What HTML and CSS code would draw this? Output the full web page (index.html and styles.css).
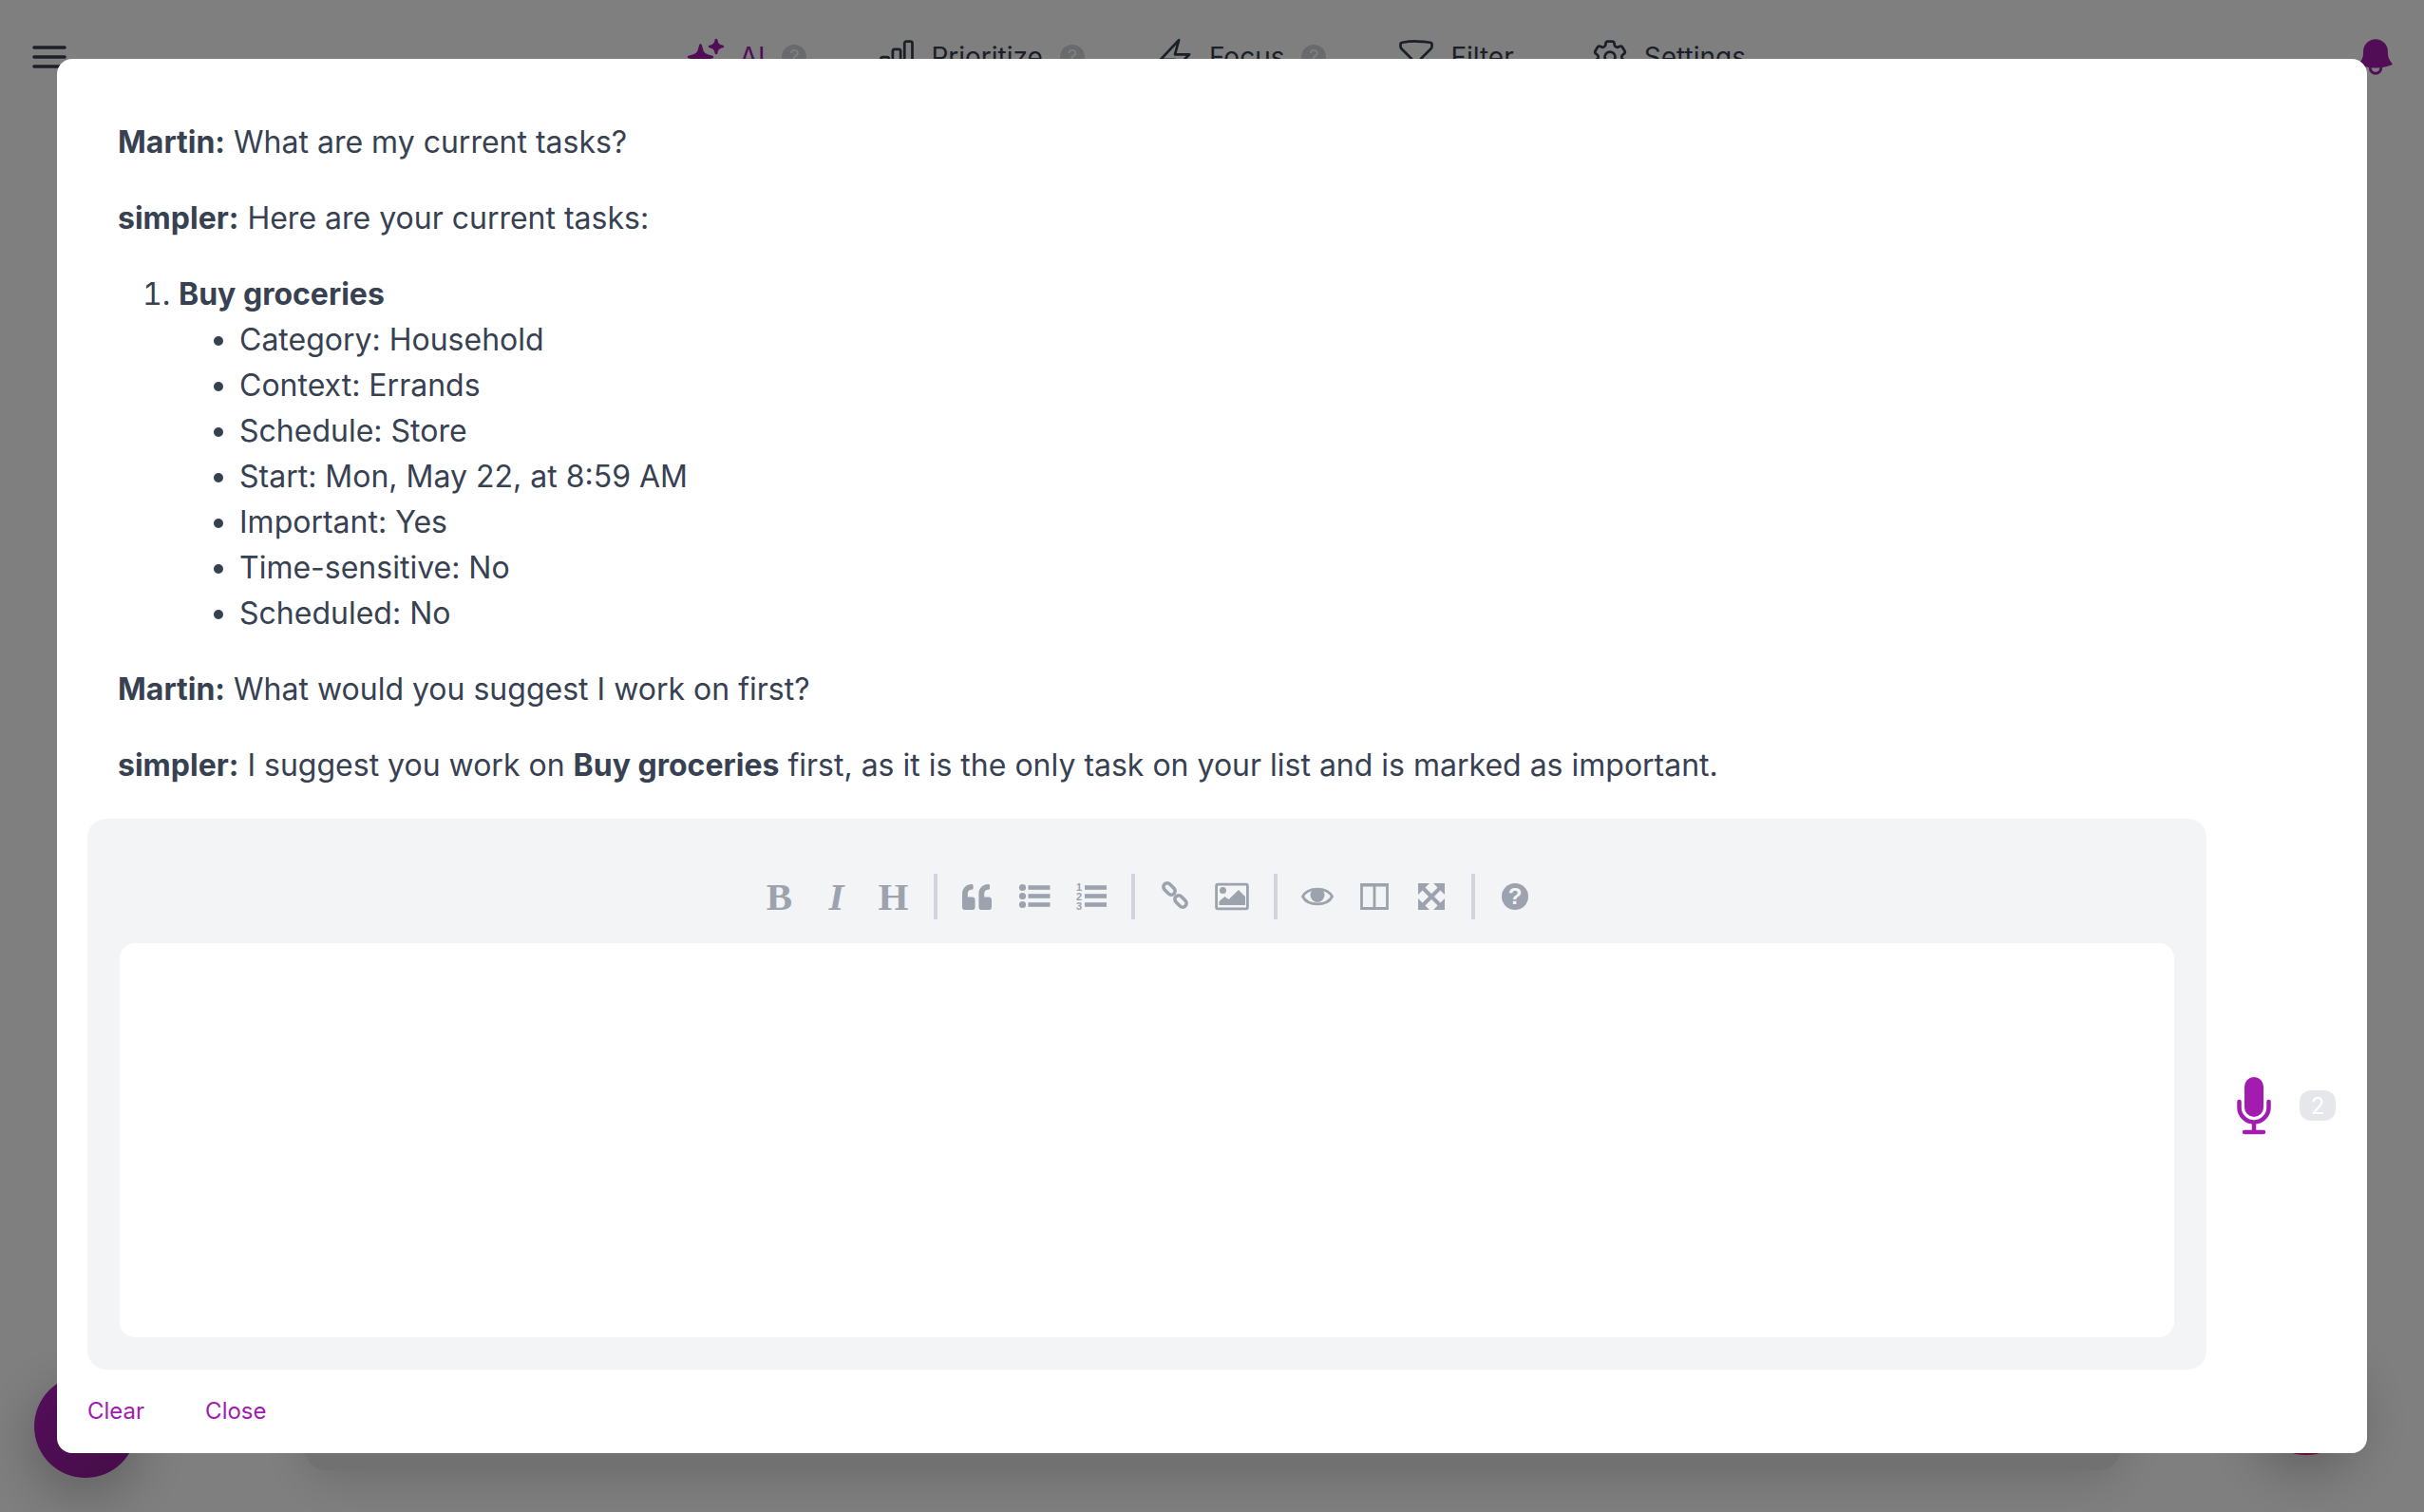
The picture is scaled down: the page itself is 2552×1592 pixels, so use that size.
FILE: index.html
```html
<!DOCTYPE html>
<html lang="en">
<head>
<meta charset="utf-8">
<title>simpler</title>
<link rel="stylesheet" href="styles.css">
</head>
<body>
<header class="app-header">
  <svg class="hamburger" viewBox="0 0 36 24"><path d="M2 2h32M2 12h32M2 22h32"/></svg>
  <nav class="nav">
    <a class="nav-item nav-item-active">
      <svg class="nav-icon solid" viewBox="0 0 24 24"><path d="M9 4.5a.75.75 0 01.721.544l.813 2.846a3.75 3.75 0 002.576 2.576l2.846.813a.75.75 0 010 1.442l-2.846.813a3.75 3.75 0 00-2.576 2.576l-.813 2.846a.75.75 0 01-1.442 0l-.813-2.846a3.75 3.75 0 00-2.576-2.576l-2.846-.813a.75.75 0 010-1.442l2.846-.813A3.75 3.75 0 007.466 7.89l.813-2.846A.75.75 0 019 4.5zM18 1.5a.75.75 0 01.728.568l.258 1.036c.236.94.97 1.674 1.91 1.91l1.036.258a.75.75 0 010 1.456l-1.036.258c-.94.236-1.674.97-1.91 1.91l-.258 1.036a.75.75 0 01-1.456 0l-.258-1.036a2.625 2.625 0 00-1.91-1.91l-1.036-.258a.75.75 0 010-1.456l1.036-.258a2.625 2.625 0 001.91-1.91l.258-1.036A.75.75 0 0118 1.5zM16.5 15a.75.75 0 01.712.513l.394 1.183c.15.447.5.799.948.948l1.183.395a.75.75 0 010 1.422l-1.183.395c-.447.15-.799.5-.948.948l-.395 1.183a.75.75 0 01-1.422 0l-.395-1.183a1.5 1.5 0 00-.948-.948l-1.183-.395a.75.75 0 010-1.422l1.183-.395c.447-.15.799-.5.948-.948l.395-1.183A.75.75 0 0116.5 15z"/></svg>
      <span>AI</span><span class="nav-badge">?</span>
    </a>
    <a class="nav-item">
      <svg class="nav-icon" viewBox="0 0 24 24"><path d="M3 13.125C3 12.504 3.504 12 4.125 12h2.25c.621 0 1.125.504 1.125 1.125v6.75C7.5 20.496 6.996 21 6.375 21h-2.25A1.125 1.125 0 013 19.875v-6.75zM9.75 8.625c0-.621.504-1.125 1.125-1.125h2.25c.621 0 1.125.504 1.125 1.125v11.25c0 .621-.504 1.125-1.125 1.125h-2.25a1.125 1.125 0 01-1.125-1.125V8.625zM16.5 4.125c0-.621.504-1.125 1.125-1.125h2.25C20.496 3 21 3.504 21 4.125v15.75c0 .621-.504 1.125-1.125 1.125h-2.25a1.125 1.125 0 01-1.125-1.125V4.125z"/></svg>
      <span>Prioritize</span><span class="nav-badge">?</span>
    </a>
    <a class="nav-item">
      <svg class="nav-icon" viewBox="0 0 24 24"><path d="M3.75 13.5l10.5-11.25L12 10.5h8.25L9.75 21.75 12 13.5H3.75z"/></svg>
      <span>Focus</span><span class="nav-badge">?</span>
    </a>
    <a class="nav-item">
      <svg class="nav-icon" viewBox="0 0 24 24"><path d="M12 3c2.755 0 5.455.232 8.083.678.533.09.917.556.917 1.096v1.044a2.25 2.25 0 01-.659 1.591l-5.432 5.432a2.25 2.25 0 00-.659 1.591v2.927a2.25 2.25 0 01-1.244 2.013L9.75 21v-6.568a2.25 2.25 0 00-.659-1.591L3.659 7.409A2.25 2.25 0 013 5.818V4.774c0-.54.384-1.006.917-1.096A48.32 48.32 0 0112 3z"/></svg>
      <span>Filter</span>
    </a>
    <a class="nav-item nav-item-last">
      <svg class="nav-icon" viewBox="0 0 24 24"><path d="M9.594 3.94c.09-.542.56-.94 1.11-.94h2.593c.55 0 1.02.398 1.11.94l.213 1.281c.063.374.313.686.645.87.074.04.147.083.22.127.324.196.72.257 1.075.124l1.217-.456a1.125 1.125 0 011.37.49l1.296 2.247a1.125 1.125 0 01-.26 1.431l-1.003.827c-.293.24-.438.613-.431.992a6.759 6.759 0 010 .255c-.007.378.138.75.43.99l1.005.828c.424.35.534.954.26 1.43l-1.298 2.247a1.125 1.125 0 01-1.369.491l-1.217-.456c-.355-.133-.75-.072-1.076.124a6.57 6.57 0 01-.22.128c-.331.183-.581.495-.644.869l-.213 1.28c-.09.543-.56.941-1.11.941h-2.594c-.55 0-1.02-.398-1.11-.94l-.213-1.281c-.062-.374-.312-.686-.644-.87a6.52 6.52 0 01-.22-.127c-.325-.196-.72-.257-1.076-.124l-1.217.456a1.125 1.125 0 01-1.369-.49l-1.297-2.247a1.125 1.125 0 01.26-1.431l1.004-.827c.292-.24.437-.613.43-.992a6.932 6.932 0 010-.255c.007-.378-.138-.75-.43-.99l-1.004-.828a1.125 1.125 0 01-.26-1.43l1.297-2.247a1.125 1.125 0 011.37-.491l1.216.456c.356.133.751.072 1.076-.124.072-.044.146-.087.22-.128.332-.183.582-.495.644-.869l.214-1.281z"/><path d="M15 12a3 3 0 11-6 0 3 3 0 016 0z"/></svg>
      <span>Settings</span>
    </a>
  </nav>
  <svg class="bell" viewBox="0 0 24 24"><path fill-rule="evenodd" d="M5.25 9a6.75 6.75 0 0113.5 0v.75c0 2.123.8 4.057 2.118 5.52a.75.75 0 01-.297 1.206c-1.544.57-3.16.99-4.831 1.243a3.75 3.75 0 11-7.48 0 24.585 24.585 0 01-4.831-1.244.75.75 0 01-.298-1.205A8.217 8.217 0 005.25 9.75V9zm4.502 8.9a2.25 2.25 0 104.496 0 25.057 25.057 0 01-4.496 0z"/></svg>
</header>

<div class="fab fab-left"></div>
<div class="bottom-bar"></div>
<div class="fab fab-right"></div>

<div class="overlay">
  <section class="modal">
    <div class="chat">
      <p><strong>Martin:</strong> What are my current tasks?</p>
      <p><strong>simpler:</strong> Here are your current tasks:</p>
      <ol>
        <li><strong>Buy groceries</strong>
          <ul>
            <li>Category: Household</li>
            <li>Context: Errands</li>
            <li>Schedule: Store</li>
            <li>Start: Mon, May 22, at 8:59 AM</li>
            <li>Important: Yes</li>
            <li>Time-sensitive: No</li>
            <li>Scheduled: No</li>
          </ul>
        </li>
      </ol>
      <p><strong>Martin:</strong> What would you suggest I work on first?</p>
      <p><strong>simpler:</strong> I suggest you work on <strong>Buy groceries</strong> first, as it is the only task on your list and is marked as important.</p>
    </div>

    <div class="composer">
      <div class="editor-panel">
        <div class="toolbar">
          <button class="tool"><span class="glyph">B</span></button>
          <button class="tool"><span class="glyph glyph-italic">I</span></button>
          <button class="tool"><span class="glyph">H</span></button>
          <i class="sep"></i>
          <button class="tool"><svg class="tool-icon tool-icon-quote" viewBox="0 0 512 512"><path d="M464 256h-80v-64c0-35.3 28.7-64 64-64h8c13.3 0 24-10.7 24-24V56c0-13.3-10.7-24-24-24h-8c-88.4 0-160 71.6-160 160v240c0 26.5 21.5 48 48 48h128c26.5 0 48-21.5 48-48V304c0-26.5-21.5-48-48-48zm-288 0H96v-64c0-35.3 28.7-64 64-64h8c13.3 0 24-10.7 24-24V56c0-13.3-10.7-24-24-24h-8C71.6 32 0 103.6 0 192v240c0 26.5 21.5 48 48 48h128c26.500 0 48-21.5 48-48V304c0-26.5-21.5-48-48-48z"/></svg></button>
          <button class="tool"><svg class="tool-icon" viewBox="0 0 36 36"><circle cx="5.5" cy="8.5" r="3.6"/><circle cx="5.5" cy="17.5" r="3.6"/><circle cx="5.5" cy="26.5" r="3.6"/><rect x="11.5" y="6.2" width="23" height="4.6"/><rect x="11.5" y="15.2" width="23" height="4.6"/><rect x="11.5" y="24.2" width="23" height="4.6"/></svg></button>
          <button class="tool"><svg class="tool-icon" viewBox="0 0 36 36"><text class="ol-num" x="2" y="12">1</text><text class="ol-num" x="2" y="22">2</text><text class="ol-num" x="2" y="32">3</text><rect x="11" y="6.2" width="23" height="4.6"/><rect x="11" y="15.2" width="23" height="4.6"/><rect x="11" y="24.2" width="23" height="4.6"/></svg></button>
          <i class="sep"></i>
          <button class="tool"><svg class="tool-icon" viewBox="0 0 36 36"><g class="line-link"><rect x="5" y="6" width="14" height="8" rx="4" transform="rotate(45 12 10)"/><rect x="17" y="19" width="14" height="8" rx="4" transform="rotate(45 24 23)"/></g></svg></button>
          <button class="tool"><svg class="tool-icon" viewBox="0 0 36 36"><rect class="line-thin" x="1.6" y="5.2" width="32.8" height="25.6" rx="1.5"/><circle cx="8.5" cy="11.5" r="3.5"/><path d="M4.5 27v-4l6-5 4 3 10.500-10 7 7v9z"/></svg></button>
          <i class="sep sep-wide"></i>
          <button class="tool"><svg class="tool-icon" viewBox="0 0 36 36"><path class="line-thin" d="M2.500 18C8 7.500 28 7.500 33.500 18 28 28.500 8 28.500 2.500 18z"/><circle cx="18" cy="16.500" r="7.500"/></svg></button>
          <button class="tool"><svg class="tool-icon" viewBox="0 0 36 36"><path class="line-thin" d="M4.500 5.500h27v25h-27zM18 5.500v25"/><rect x="3.500" y="4" width="29" height="3.500" rx="1.500"/></svg></button>
          <button class="tool"><svg class="tool-icon" viewBox="0 0 36 36"><path class="line-art" d="M9 9l18 18M27 9L9 27"/><path d="M4 4h12L4 16zM32 4v12L20 4zM4 32V20l12 12zM32 32H20l12-12z"/></svg></button>
          <i class="sep"></i>
          <button class="tool"><svg class="tool-icon" viewBox="0 0 36 36"><circle cx="18" cy="18" r="14"/><text class="help-mark" x="18" y="26">?</text></svg></button>
        </div>
        <div class="editor"></div>
      </div>
      <div class="voice">
        <svg class="mic" viewBox="0 0 36 62"><rect class="mic-body" x="8" y="1" width="20" height="42" rx="10"/><path class="mic-line" d="M2.500 27v6a15.500 15.500 0 0031 0v-6M18 49v10M8 59h20"/></svg>
        <span class="count">2</span>
      </div>
    </div>

    <div class="actions">
      <button class="action">Clear</button>
      <button class="action">Close</button>
    </div>
  </section>
</div>
</body>
</html>
```
FILE: styles.css
```css
* { box-sizing: border-box; }
html, body { height: 100%; }
body {
  margin: 0;
  background: #fff;
  font-family: Inter, "Noto Sans", sans-serif;
  color: #374151;
  overflow: hidden;
}
.app-header {
  display: grid;
  grid-template-columns: 1fr auto 1fr;
  align-items: center;
  height: 46px;
  margin-top: 37px;
  padding: 0 28px 0 32px;
}
.hamburger { width: 40px; height: 24px; padding: 0 2px; fill: none; stroke: #374151; stroke-width: 3.6; stroke-linecap: round; }
.nav { display: flex; align-items: center; gap: 73px; margin-left: 2.5px; font-size: 28px; line-height: 44px; }
.nav-item { display: flex; align-items: center; gap: 14px; color: #374151; }
.nav-item-active { color: #a21caf; }
.nav-item-last { margin-left: 6px; }
.nav-icon { width: 44px; height: 44px; fill: none; stroke: currentColor; stroke-width: 1.5; stroke-linecap: round; stroke-linejoin: round; }
.nav-icon.solid { fill: currentColor; stroke: none; }
.nav-badge {
  display: flex; align-items: center; justify-content: center;
  width: 26px; height: 26px; margin-left: 4px;
  border-radius: 50%; background: #d1d5db; color: #fff; font-size: 20px;
}
.bell { justify-self: end; width: 46px; height: 46px; fill: #a21caf; }

.fab { position: absolute; width: 108px; height: 108px; border-radius: 50%; box-shadow: 0 16px 60px rgba(0,0,0,.28); }
.fab-left { left: 36px; top: 1448px; background: linear-gradient(135deg, #aa1cb8, #8a1a8e); }
.fab-right { left: 2374px; top: 1424px; background: #c8157f; }
.bottom-bar { position: absolute; left: 320px; top: 1440px; width: 1913px; height: 108px; border-radius: 24px; background: #e2e2e3; box-shadow: 0 8px 50px rgba(0,0,0,.16); }

.overlay {
  position: fixed; inset: 0;
  display: flex;
  padding: 62px 60px;
  background: rgba(0,0,0,.5);
}
.modal {
  display: flex; flex-direction: column;
  width: 100%;
  border-radius: 16px;
  background: #fff;
  padding: 64px 32px 0;
}
.chat { padding: 0 32px; font-size: 32px; line-height: 48px; }
.chat p { margin: 0 0 32px; }
.chat strong { font-weight: 700; }
.chat ol { margin: 0 0 32px; padding-left: 64px; }
.chat ul { margin: 0; padding-left: 64px; list-style: disc; }
.chat > :last-child { margin-bottom: 0; }

.composer { display: flex; align-items: center; margin-top: 32px; }
.editor-panel {
  flex: none;
  width: 2231px;
  padding: 33px 34px 34px;
  border-radius: 20px;
  background: #f3f4f6;
}
.toolbar { display: flex; align-items: center; justify-content: center; height: 98px; color: #9ca3af; }
.tool { display: flex; align-items: center; justify-content: center; width: 60px; height: 60px; padding: 0; border: 0; background: none; color: inherit; }
.tool-icon { width: 36px; height: 36px; fill: currentColor; }
.tool-icon-quote { width: 31px; height: 31px; }
.tool-icon text { fill: currentColor; }
.glyph { font: 700 41px/1 "Liberation Serif", serif; }
.glyph-italic { font-style: italic; }
.sep { width: 4px; height: 48px; margin: 0 12px; background: #d1d5db; }
.sep-wide { margin-left: 14px; }
.line-art { fill: none; stroke: currentColor; stroke-width: 4; }
.line-thin { fill: none; stroke: currentColor; stroke-width: 2.8; }
.line-link { fill: none; stroke: currentColor; stroke-width: 3.6; }
.tool-icon .ol-num { font: 700 11px "Liberation Sans", sans-serif; }
.tool-icon .help-mark { font: 700 24px "Liberation Sans", sans-serif; text-anchor: middle; fill: #f3f4f6; }
.editor { height: 415px; border-radius: 16px; background: #fff; }

.voice { display: flex; align-items: center; gap: 30px; margin: 24px 0 0 32px; }
.mic { width: 36px; height: 62px; }
.mic-body { fill: #a21caf; }
.mic-line { fill: none; stroke: #a21caf; stroke-width: 4.5; stroke-linecap: round; }
.count {
  display: flex; align-items: center; justify-content: center;
  width: 38px; height: 32px;
  border-radius: 12px;
  background: #e5e7eb; color: #fff; font-size: 24px;
}

.actions { display: flex; gap: 64px; margin-top: 22px; }
.action { padding: 0; border: 0; background: none; color: #a21caf; font: 400 24px/44px Inter, "Noto Sans", sans-serif; }
```
